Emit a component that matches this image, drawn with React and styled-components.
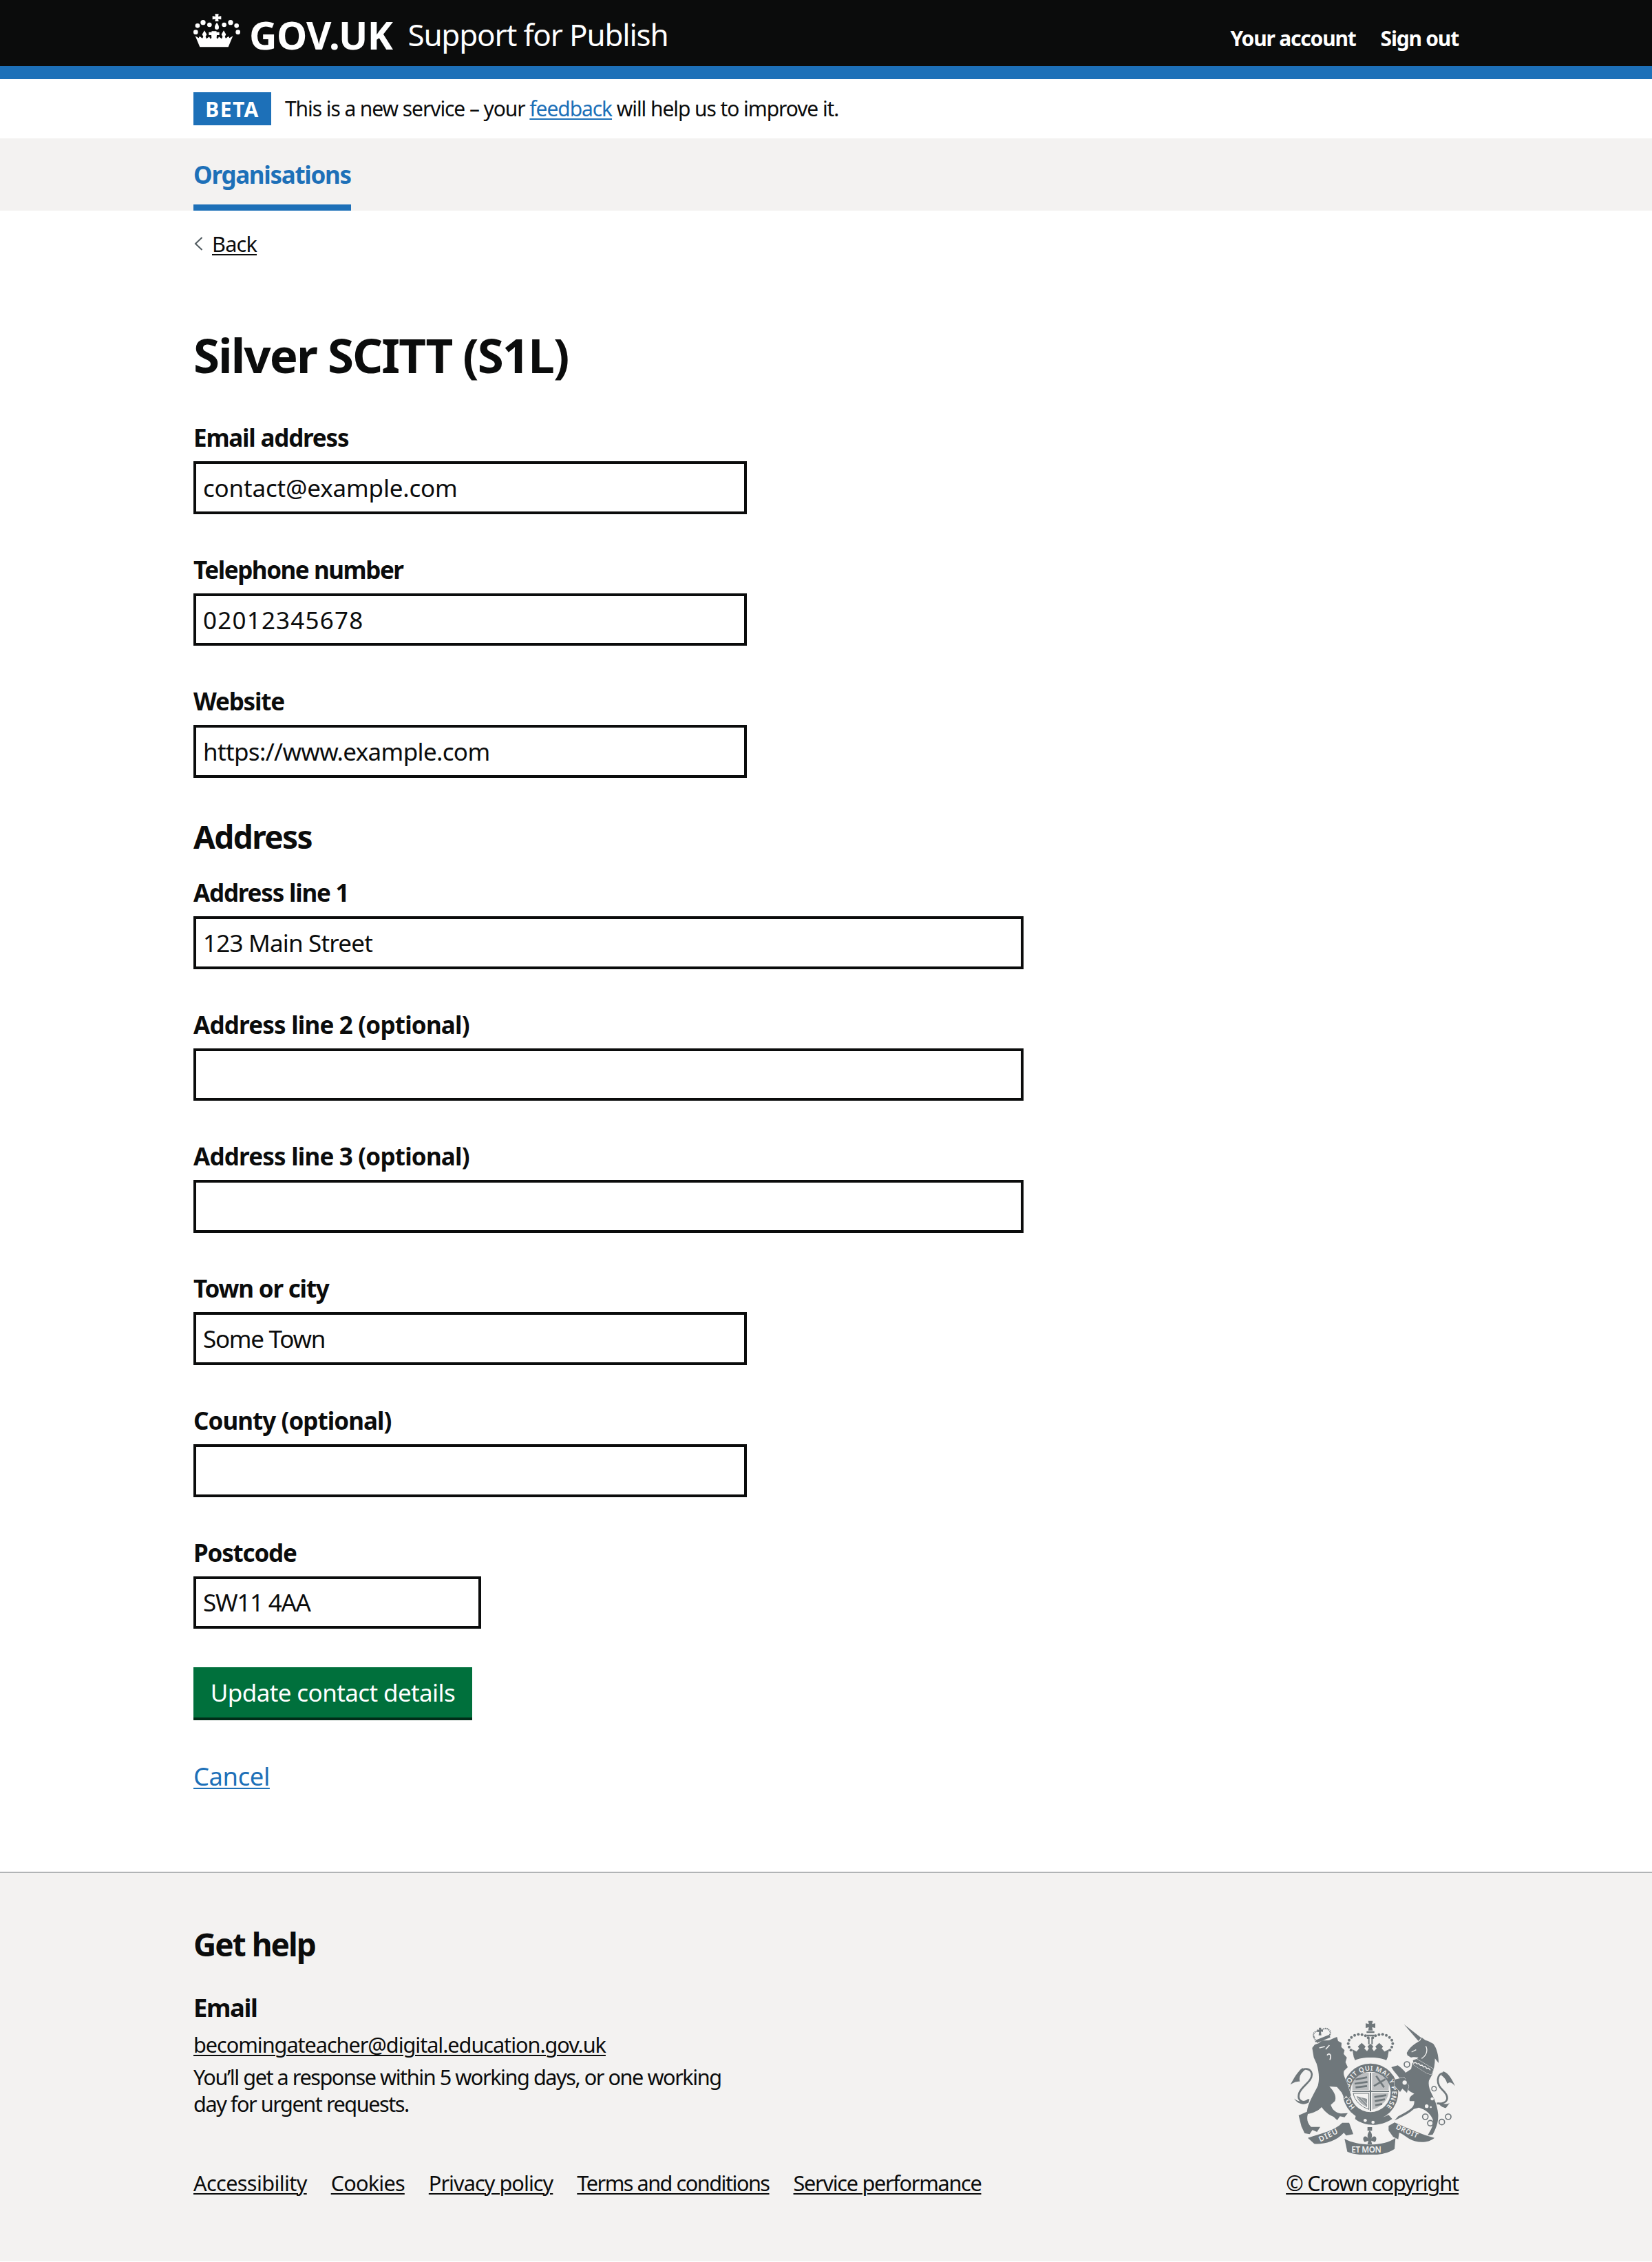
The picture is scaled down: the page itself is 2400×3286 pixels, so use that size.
import React from 'react';
import styled, { createGlobalStyle } from 'styled-components';

const GlobalStyle = createGlobalStyle`
  html, body { margin: 0; padding: 0; background: #fff; }
  body {
    font-family: "Noto Sans", "Open Sans", Arial, sans-serif;
    color: #0b0c0c;
  }
  * { box-sizing: border-box; }
`;

const Container = styled.div`
  width: 1838px;
  margin: 0 auto;
`;

/* header */
const HeaderBar = styled.header`
  background: #0b0c0c;
  height: 115px;
  border-bottom: 19px solid #1d70b8;
  color: #fff;
`;

const HeaderInner = styled(Container)`
  display: flex;
  justify-content: space-between;
  height: 96px;
  padding-top: 19px;
`;

const Brand = styled.div`
  display: flex;
  align-items: flex-start;
`;

const Wordmark = styled.span`
  font-size: 56px;
  line-height: 62px;
  font-weight: 700;
  letter-spacing: -0.6px;
  margin-left: 13px;
`;

const ServiceName = styled.span`
  font-size: 44px;
  line-height: 62px;
  margin-left: 22px;
  letter-spacing: -1.2px;
`;

const HeaderNav = styled.nav`
  display: flex;
  gap: 36px;
  padding-top: 18px;
`;

const HeaderLink = styled.a`
  font-size: 30px;
  line-height: 38px;
  font-weight: 700;
  letter-spacing: -1.2px;
  color: #fff;
`;

/* phase banner */
const PhaseBanner = styled(Container)`
  display: flex;
  align-items: center;
  height: 86px;
`;

const PhaseTag = styled.strong`
  width: 113px;
  height: 48px;
  background: #1d70b8;
  color: #fff;
  font-size: 30px;
  line-height: 50px;
  font-weight: 700;
  text-align: center;
  letter-spacing: 1.4px;
  margin-right: 20px;
`;

const PhaseText = styled.span`
  font-size: 30px;
  line-height: 38px;
  letter-spacing: -1.08px;
`;

const Link = styled.a`
  color: ${(p) => p.$colour || '#0b0c0c'};
  text-decoration: underline;
  text-decoration-thickness: 2px;
  text-underline-offset: 3px;
  ${(p) => p.$tracking && `letter-spacing: ${p.$tracking}px;`}
`;

/* primary navigation */
const NavBar = styled.nav`
  background: #f3f2f1;
  height: 105px;
`;

const NavItem = styled.a`
  display: inline-block;
  height: 105px;
  padding-top: 29px;
  border-bottom: 9px solid #1d70b8;
  color: #1d70b8;
  font-size: 35px;
  line-height: 48px;
  font-weight: 700;
  letter-spacing: -1.3px;
`;

/* main form */
const BackRow = styled.div`
  display: flex;
  align-items: center;
  gap: 13px;
  margin-top: 29px;
  padding-left: 1px;
  font-size: 30.67px;
  line-height: 38px;
  letter-spacing: -0.8px;
`;

const Title = styled.h1`
  margin: 104px 0 58px;
  font-size: 69px;
  line-height: 77px;
  font-weight: 700;
  letter-spacing: -1.95px;
`;

const Group = styled.div`
  margin-bottom: 57px;
`;

const Label = styled.label`
  display: block;
  font-size: 35px;
  line-height: 48px;
  font-weight: 700;
  letter-spacing: ${(p) => p.$tracking ?? -1.2}px;
  margin-bottom: 10px;
`;

const Input = styled.input`
  display: block;
  width: ${(p) => p.$width}px;
  height: 76.7px;
  border: 4px solid #0b0c0c;
  border-radius: 0;
  padding: 0 10px;
  font-family: inherit;
  font-size: 35px;
  color: #0b0c0c;
  background: #fff;
  letter-spacing: ${(p) => p.$tracking || 0}px;
  outline: 0;
`;

const SectionHeading = styled.h2`
  margin: -1px 0 29px;
  font-size: 46px;
  line-height: 58px;
  font-weight: 700;
  letter-spacing: -1.6px;
`;

const SubmitButton = styled.button`
  display: block;
  width: 405px;
  height: 73px;
  margin-top: -1px;
  border: 0;
  border-radius: 0;
  padding: 0;
  background: #00703c;
  box-shadow: 0 4px 0 #002d18;
  color: #fff;
  font-family: inherit;
  font-size: 35px;
  line-height: 48px;
  letter-spacing: -0.6px;
`;

const CancelRow = styled.div`
  margin: 61px 0 115px;
  font-size: 36.4px;
  line-height: 48px;
  letter-spacing: -0.4px;
`;

/* footer */
const Footer = styled.footer`
  background: #f3f2f1;
  border-top: 2px solid #b1b4b6;
  height: 566px;
  padding-top: 74px;
`;

const FooterInner = styled(Container)`
  display: flex;
  justify-content: space-between;
  align-items: flex-end;
`;

const FooterHeading = styled.h2`
  margin: 0 0 39px;
  font-size: 46px;
  line-height: 58px;
  font-weight: 700;
  letter-spacing: -2px;
`;

const FooterSubheading = styled.h3`
  margin: 0 0 11px;
  font-size: 36.4px;
  line-height: 48px;
  font-weight: 700;
  letter-spacing: -1.4px;
`;

const FooterText = styled.p`
  margin: 0 0 9px;
  font-size: 30.67px;
  line-height: 38.3px;
  letter-spacing: ${(p) => p.$tracking}px;
`;

const MetaLinks = styled.div`
  display: flex;
  gap: 35px;
  margin-top: 77px;
  font-size: 30.67px;
  line-height: 38.3px;
`;

const CopyrightColumn = styled.div`
  display: flex;
  flex-direction: column;
  align-items: center;
  gap: 22px;
  font-size: 30.67px;
  line-height: 38.3px;
  letter-spacing: -1.15px;
`;

const CrownMark = () => (
  <svg width="68" height="50" viewBox="18 12 204 150" fill="#fff" aria-hidden="true">
    <circle cx="28" cy="95" r="10" />
    <circle cx="36" cy="67" r="10" />
    <circle cx="60" cy="53" r="11" />
    <circle cx="88" cy="63" r="10" />
    <circle cx="152" cy="63" r="10" />
    <circle cx="180" cy="53" r="11" />
    <circle cx="206" cy="67" r="10" />
    <circle cx="212" cy="95" r="10" />
    <path d="M112 16h16l-2 11 13-2v15l-13-2 2 10h-16l2-10-13 2V25l13 2z" />
    <path d="M120 54c7 8 9 16 9 21a9 9 0 0 1-18 0c0-5 2-13 9-21z" />
    <path d="M26 112l15 9 4-8 12 9 4-7-5-10 10-17 10 17-5 10 4 9 12-9 4 9 6-3-1-13h-11v-13h13l-1-4h22l-1 4h13v13h-11l-1 13 6 3 4-9 12 9 4-9-5-10 10-17 10 17-5 10 4 7 12-9 4 8 15-9-20 48H46z" />
  </svg>
);

const crestBeads = [
  [366, 240], [358, 226], [354, 211], [358, 196], [368, 184], [382, 175], [398, 171], [414, 172], [429, 177], [441, 186],
  [536, 240], [544, 226], [548, 211], [544, 196], [534, 184], [520, 175], [504, 171], [488, 172], [473, 177], [461, 186],
];

const crestChains = [
  [610, 302], [600, 381], [690, 530], [712, 558], [762, 553], [790, 530],
];

const crestFont = '"Noto Sans", Arial, sans-serif';

const Crest = () => (
  <svg width="240" height="195" viewBox="100 110 720 585" fill="#6f777b" aria-hidden="true">
    {/* royal crown */}
    {crestBeads.map(([cx, cy]) => (
      <circle key={cx + '-' + cy} cx={cx} cy={cy} r="6" />
    ))}
    <path d="M441 112h20l-3 14 14-3v20l-14-3 3 14h-20l3-14-14 3v-20l14 3z" />
    <path d="M434 157h34v8h-34zM434 172h34v8h-34zM441 184h6v30h-6zM455 184h6v30h-6z" />
    <path d="M372 236 L390 246 L402 232 L396 224 L413 208 L430 224 L424 232 L436 244 L444 232 L438 224 L451 212 L464 224 L458 232 L466 244 L478 232 L472 224 L489 208 L506 224 L500 232 L512 246 L532 236 L526 270 L520 284 C490 268 412 268 384 284 L378 270 Z" />
    <path d="M386 286 C420 268 484 268 518 286 L524 300 C490 286 414 286 382 300 Z" fill="#f3f2f1" />

    {/* garter and shield */}
    <ellipse cx="451" cy="422" rx="121" ry="124" />
    <circle cx="451" cy="422" r="88" fill="#f3f2f1" />
    <path id="garter-ring" d="M384.5 488.5 A94 94 0 1 1 517.5 488.5" fill="none" />
    <text fontFamily={crestFont} fontSize="29" fontWeight="600" fill="#f3f2f1">
      <textPath href="#garter-ring" textLength="438">HONI SOIT QUI MAL Y PENSE</textPath>
    </text>
    <path d="M448 338h6v168h-6zM372 417h160v5H372z" />
    <path d="M378 352 C392 342 425 338 444 338 V413 H372 C372 390 372 370 378 352 Z M458 338 C480 338 510 342 525 352 C532 370 532 392 530 413 H458 Z M458 426 H530 C526 462 492 490 458 500 Z" opacity="0.42" />
    <path d="M386 368 L436 358 M382 386 L438 378 M386 402 L436 396 M476 352 L510 402 M466 396 L516 366 M468 444 L520 436 M470 462 L514 454 M472 480 L502 474" fill="none" stroke="#6f777b" strokeWidth="8" />
    <path d="M376 428 H444 V498 C410 486 382 462 376 428 Z" fill="none" stroke="#6f777b" strokeWidth="3" />
    <path d="M390 440 L436 452 L436 488 C412 476 396 460 390 440 Z" opacity="0.75" />
    <path d="M396 448 L432 486 M408 446 L436 474 M392 458 L420 486" fill="none" stroke="#f3f2f1" strokeWidth="2" />

    {/* lion */}
    <path
      d="M197 230 L208 216 L225 210 L240 198 L270 197 L290 188 L305 182 L310 200 L325 208 L324 226 L338 240 L334 256 L348 272 L342 292 L352 314 L336 330 C330 345 340 360 350 385 L366 436 L356 452 L344 438 L338 452 L326 425 L305 400 L272 398 C292 420 304 440 296 462 L278 478 C285 500 300 512 322 516 L352 514 L338 532 L318 528 L306 545 L290 530 C268 522 250 505 238 488 C222 505 205 512 178 518 C172 540 176 558 192 574 L232 574 L218 596 L198 588 L186 606 L164 602 L150 572 L138 524 L174 508 C178 470 205 430 222 394 C230 365 226 330 216 298 L204 272 Z"
      stroke="#f3f2f1"
      strokeWidth="3"
      paintOrder="stroke"
    />
    <path d="M182 455 C160 475 130 462 140 428 C150 396 200 376 195 342 C190 318 160 316 145 332" fill="none" stroke="#6f777b" strokeWidth="8" />
    <path d="M155 318 C135 330 118 362 102 390 C120 378 128 376 143 376 C138 356 148 340 165 326 Z" />
    <path d="M118 450 C135 468 165 468 185 452 L182 468 C160 482 132 474 118 450 Z" />
    <path d="M228 230 L252 224 M272 218 L256 236 M262 262 C270 250 284 258 274 282" fill="none" stroke="#f3f2f1" strokeWidth="5" />
    {/* lion crown */}
    <path d="M205 184 C196 164 214 154 228 158 C240 146 262 140 270 152 C278 158 278 168 270 180 L214 204 Z" fill="none" stroke="#6f777b" strokeWidth="6" strokeDasharray="5 3" />
    <path d="M212 196 L272 172 L276 184 L218 208 Z" />
    <path d="M226 142h10l-1 9 9-1v10l-9-1 2 16h-12l2-16-9 1v-10l9 1z" />

    {/* unicorn */}
    <path d="M597 127 L672 186 L660 200 Z" />
    <path
      d="M609 252 C618 235 630 222 645 212 L668 198 L674 184 L690 196 L702 200 L725 212 C740 232 748 262 748 296 L732 276 C732 300 728 322 720 346 L706 372 C702 392 708 410 718 430 C732 455 744 490 746 520 C748 555 735 585 722 608 L700 612 C712 590 728 570 722 540 C712 515 690 498 662 490 L640 496 C620 515 590 530 556 546 L572 528 C590 518 610 508 628 494 C640 484 642 474 642 462 L622 462 C618 448 626 438 642 430 C622 420 604 406 594 392 C590 380 580 362 552 330 L542 314 L570 306 C584 316 596 326 604 338 L628 322 L634 296 L650 282 L660 272 C648 270 636 268 628 272 L612 262 Z"
      stroke="#f3f2f1"
      strokeWidth="3"
      paintOrder="stroke"
    />
    <path d="M556 368 L598 358 L618 396 L610 426 L590 408 L580 422 L556 395 Z" stroke="#f3f2f1" strokeWidth="3" paintOrder="stroke" />
    <path d="M636 284 L652 278 L726 322 L716 346 L696 340 L640 304 Z" stroke="#f3f2f1" strokeWidth="3" paintOrder="stroke" />
    <path d="M638 296 l10 -2 6 6 8 -2 6 8 8 -1 6 8 8 -2 6 8 8 -1 8 9" fill="none" stroke="#f3f2f1" strokeWidth="4" />
    <path d="M630 248 L650 238 M692 222 C702 240 696 262 674 276" fill="none" stroke="#f3f2f1" strokeWidth="4" />
    <path d="M740 472 C792 476 798 444 764 412 C736 386 738 340 772 340" fill="none" stroke="#6f777b" strokeWidth="8" />
    <path d="M768 332 C792 340 806 366 820 396 C806 382 796 376 786 386 C780 366 770 356 760 350 Z" />
    <path d="M745 468 C765 474 782 478 796 470 L780 492 C764 490 754 482 745 468 Z" />
    <circle cx="720" cy="452" r="7" fill="#f3f2f1" />
    <circle cx="696" cy="484" r="8" fill="#f3f2f1" />
    <circle cx="714" cy="488" r="4" fill="#f3f2f1" />
    <circle cx="728" cy="408" r="10" fill="#f3f2f1" stroke="#6f777b" strokeWidth="4" />
    {crestChains.map(([cx, cy]) => (
      <circle key={cx} cx={cx} cy={cy} r="12" fill="#f3f2f1" stroke="#6f777b" strokeWidth="5" />
    ))}

    {/* buckle */}
    <path d="M390 508 C425 540 480 546 530 522 L546 540 C490 576 425 572 384 540 Z" />
    <circle cx="428" cy="546" r="7" fill="#f3f2f1" />
    <circle cx="462" cy="554" r="7" fill="#f3f2f1" />
    {/* fleur */}
    <path d="M438 575h20v16h-20z" />
    <path d="M448 590 C460 604 460 618 452 628 C470 600 486 626 470 640 L454 634 L458 650 H438 L442 634 L426 640 C410 626 426 600 444 628 C436 618 436 604 448 590 Z" />
    {/* ribbon */}
    <path d="M178 622 C240 602 295 590 328 556 L358 556 L376 606 L345 612 L335 600 C300 640 240 652 206 648 Z" />
    <path d="M338 626 C400 660 510 660 560 622 L556 670 C510 704 400 704 350 682 Z" />
    <path d="M530 590 L530 570 L556 555 C610 578 670 606 730 622 C700 648 650 644 620 626 C600 614 590 604 576 600 L572 628 L550 618 Z" />
    <text fontFamily={crestFont} fontSize="33" fontWeight="600" fill="#f3f2f1" transform="rotate(-26 232 640)" x="232" y="640" letterSpacing="3">DIEU</text>
    <text fontFamily={crestFont} fontSize="35" fontWeight="600" fill="#f3f2f1" x="368" y="686">ET MON</text>
    <text fontFamily={crestFont} fontSize="30" fontWeight="600" fill="#f3f2f1" transform="rotate(24 560 582)" x="560" y="582" letterSpacing="2">DROIT</text>
  </svg>
);

const BackChevron = () => (
  <svg width="13" height="20" viewBox="0 0 13 20" aria-hidden="true">
    <path d="M11.5 1 L2 10 L11.5 19" fill="none" stroke="#505a5f" strokeWidth="2" />
  </svg>
);

const Field = ({ label, labelTracking, value, width, tracking }) => (
  <Group>
    <Label $tracking={labelTracking}>{label}</Label>
    <Input $width={width} $tracking={tracking} defaultValue={value} />
  </Group>
);

export default function App() {
  return (
    <>
      <GlobalStyle />
      <HeaderBar>
        <HeaderInner>
          <Brand>
            <CrownMark />
            <Wordmark>GOV.UK</Wordmark>
            <ServiceName>Support for Publish</ServiceName>
          </Brand>
          <HeaderNav>
            <HeaderLink>Your account</HeaderLink>
            <HeaderLink>Sign out</HeaderLink>
          </HeaderNav>
        </HeaderInner>
      </HeaderBar>

      <PhaseBanner>
        <PhaseTag>BETA</PhaseTag>
        <PhaseText>
          This is a new service – your <Link $colour="#1d70b8">feedback</Link> will help us to improve it.
        </PhaseText>
      </PhaseBanner>

      <NavBar>
        <Container>
          <NavItem>Organisations</NavItem>
        </Container>
      </NavBar>

      <Container>
        <BackRow>
          <BackChevron />
          <Link>Back</Link>
        </BackRow>
        <Title>Silver SCITT (S1L)</Title>

        <Field label="Email address" value="contact@example.com" width={804} tracking={-0.18} />
        <Field label="Telephone number" labelTracking={-1.45} value="02012345678" width={804} tracking={1.2} />
        <Field label="Website" value="https://www.example.com" width={804} tracking={-0.65} />

        <SectionHeading>Address</SectionHeading>
        <Field label="Address line 1" value="123 Main Street" width={1206} tracking={-0.8} />
        <Field label="Address line 2 (optional)" labelTracking={-0.8} value="" width={1206} />
        <Field label="Address line 3 (optional)" labelTracking={-0.8} value="" width={1206} />
        <Field label="Town or city" value="Some Town" width={804} tracking={-1.28} />
        <Field label="County (optional)" labelTracking={-0.95} value="" width={804} />
        <Field label="Postcode" value="SW11 4AA" width={418} tracking={-1.25} />

        <SubmitButton>Update contact details</SubmitButton>
        <CancelRow>
          <Link $colour="#1d70b8">Cancel</Link>
        </CancelRow>
      </Container>

      <Footer>
        <FooterInner>
          <div>
            <FooterHeading>Get help</FooterHeading>
            <FooterSubheading>Email</FooterSubheading>
            <FooterText $tracking={-1.05}>
              <Link>becomingateacher@digital.education.gov.uk</Link>
            </FooterText>
            <FooterText $tracking={-1.46}>
              You’ll get a response within 5 working days, or one working
              <br />
              day for urgent requests.
            </FooterText>
            <MetaLinks>
              <Link $tracking={-0.63}>Accessibility</Link>
              <Link $tracking={-0.8}>Cookies</Link>
              <Link $tracking={-0.95}>Privacy policy</Link>
              <Link $tracking={-1.5}>Terms and conditions</Link>
              <Link $tracking={-1.3}>Service performance</Link>
            </MetaLinks>
          </div>
          <CopyrightColumn>
            <Crest />
            <Link>© Crown copyright</Link>
          </CopyrightColumn>
        </FooterInner>
      </Footer>
    </>
  );
}
